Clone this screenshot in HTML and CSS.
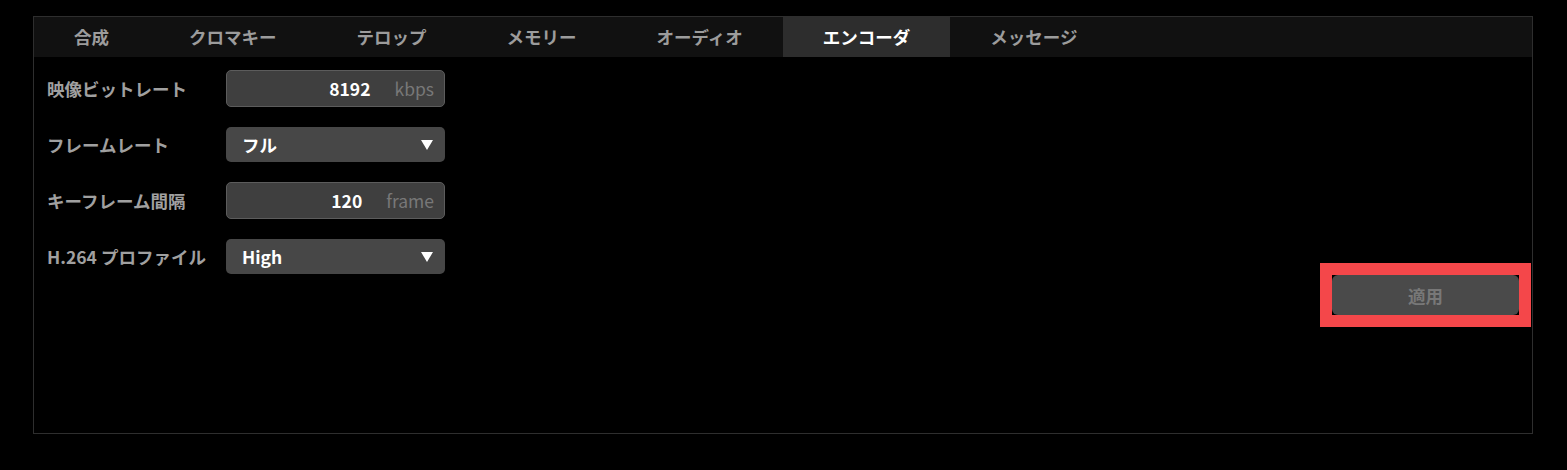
FILE: index.html
```html
<!DOCTYPE html>
<html lang="ja">
<head>
<meta charset="utf-8">
<title>エンコーダ設定</title>
<link rel="stylesheet" href="styles.css">
</head>
<body>
<div class="panel">
  <div class="tabs">
    <div class="tab">合成</div>
    <div class="tab">クロマキー</div>
    <div class="tab">テロップ</div>
    <div class="tab">メモリー</div>
    <div class="tab">オーディオ</div>
    <div class="tab active">エンコーダ</div>
    <div class="tab">メッセージ</div>
  </div>
  <div class="content">
    <div class="form">
      <div class="label">映像ビットレート</div>
      <div class="field input"><span class="value">8192</span><span class="unit">kbps</span></div>
      <div class="label">フレームレート</div>
      <div class="field select"><span class="sel-text">フル</span><svg class="arrow" width="12" height="10" viewBox="0 0 12 10"><polygon points="0,0 12,0 6,10" fill="#fff"/></svg></div>
      <div class="label">キーフレーム間隔</div>
      <div class="field input"><span class="value">120</span><span class="unit">frame</span></div>
      <div class="label">H.264 プロファイル</div>
      <div class="field select"><span class="sel-text">High</span><svg class="arrow" width="12" height="10" viewBox="0 0 12 10"><polygon points="0,0 12,0 6,10" fill="#fff"/></svg></div>
    </div>
    <div class="actions">
      <div class="btn-wrap">
        <button class="apply">適用</button>
        <span class="highlight"></span>
      </div>
    </div>
  </div>
</div>
</body>
</html>
```
FILE: styles.css
```css
html, body {
  margin: 0;
  padding: 0;
  background: #000;
}
body {
  font-family: "Noto Sans CJK JP", "Noto Sans", sans-serif;
  font-weight: 700;
  font-size: 17.5px;
}
.panel {
  margin: 16px 0 0 33px;
  width: 1498px;
  height: 416px;
  border: 1px solid #2e2e2e;
  background: #000;
  display: flex;
  flex-direction: column;
}
.tabs {
  display: flex;
  height: 40px;
  background: #111;
}
.tab {
  padding: 0 40px;
  line-height: 40px;
  color: #9c9c9c;
  white-space: nowrap;
}
.tab.active {
  background: #2d2d2d;
  color: #fff;
}
.content {
  display: flex;
  flex-direction: column;
  padding: 13px 13px 0 13px;
}
.form {
  display: grid;
  grid-template-columns: 179px 219px;
  row-gap: 20px;
  align-items: center;
}
.label {
  color: #a0a0a0;
  white-space: nowrap;
}
.field {
  box-sizing: border-box;
  display: flex;
  align-items: center;
  border-radius: 5px;
}
.input {
  height: 37px;
  background: #3f3f3f;
  border: 1px solid #5c5c5c;
  justify-content: flex-end;
  padding-right: 10px;
}
.value {
  color: #fff;
}
.unit {
  color: #787878;
  font-weight: 400;
  margin-left: 24px;
}
.select {
  height: 35px;
  background: #474747;
  padding: 0 12px 0 16px;
  justify-content: space-between;
}
.sel-text {
  color: #fff;
}
.arrow {
  display: block;
}
.actions {
  display: flex;
  justify-content: flex-end;
  margin-top: 1px;
}
.btn-wrap {
  position: relative;
  width: 187px;
  height: 40px;
}
.apply {
  display: block;
  width: 100%;
  height: 100%;
  border: none;
  border-radius: 6px;
  background: #4a4a4a;
  color: #787878;
  font-family: inherit;
  font-weight: 700;
  font-size: 17.5px;
  padding: 0;
}
.highlight {
  position: absolute;
  left: -12px;
  top: -12px;
  right: -12px;
  bottom: -12px;
  border: 12px solid #f4474a;
  pointer-events: none;
}
```
